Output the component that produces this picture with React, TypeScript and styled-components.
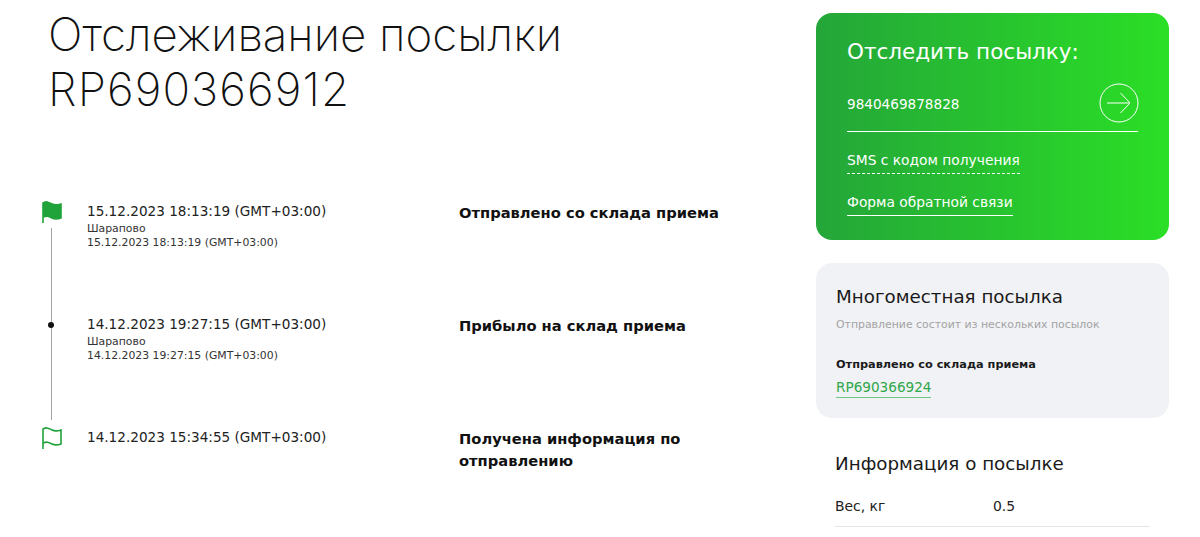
import React from 'react';
import styled, { createGlobalStyle } from 'styled-components';

const GlobalStyle = createGlobalStyle`
  html, body {
    margin: 0;
    padding: 0;
    height: 537px;
    overflow: hidden;
    background: #fff;
    font-family: "DejaVu Sans", "Noto Sans", sans-serif;
    color: #1a1a1a;
  }
`;

const Page = styled.div`
  display: flex;
  width: 1200px;
  height: 537px;
  overflow: hidden;
`;

const Main = styled.main`
  width: 816px;
  padding: 7px 0 0 48px;
  box-sizing: border-box;
`;

const Title = styled.h1`
  margin: 0 0 83px;
  width: 560px;
  font-family: "Inter", sans-serif;
  font-size: 45.7px;
  line-height: 55px;
  font-weight: 200;
  color: #111;
`;

const TitleNumber = styled.span`
  display: block;
  letter-spacing: 1.1px;
`;

const Timeline = styled.div`
  margin-left: -16px;
`;

const Row = styled.div`
  display: flex;
  height: 113px;
`;

const Marker = styled.div`
  width: 39px;
  margin-right: 16px;
  flex: none;
  display: flex;
  flex-direction: column;
  align-items: center;
`;

const MarkerSlot = styled.div<{ $through?: boolean }>`
  width: 24px;
  height: 24px;
  display: flex;
  align-items: center;
  justify-content: center;
  flex: none;
  background: ${(p) =>
    p.$through ? 'linear-gradient(#a3a3a3, #a3a3a3) center / 1px 100% no-repeat' : 'none'};
`;

const Line = styled.div<{ $gapTop?: number; $gapBottom?: number }>`
  width: 1px;
  flex: 1;
  margin-top: ${(p) => p.$gapTop ?? 0}px;
  margin-bottom: ${(p) => p.$gapBottom ?? 0}px;
  background: #a3a3a3;
`;

const Dot = styled.span`
  width: 6px;
  height: 6px;
  margin-right: 1px;
  border-radius: 50%;
  background: #111;
`;

const DateColumn = styled.div`
  width: 372px;
  flex: none;
  padding-top: 2px;
`;

const DateMain = styled.div`
  font-size: 13.6px;
  line-height: 18px;
  margin-bottom: 2px;
  color: #222;
`;

const DateSub = styled.div`
  font-size: 10.85px;
  line-height: 14px;
  color: #333;
`;

const Status = styled.div`
  width: 290px;
  flex: none;
  padding-top: 2px;
  font-size: 14.7px;
  line-height: 22px;
  font-weight: 700;
  color: #111;
`;

const Side = styled.aside`
  width: 353px;
  flex: none;
  padding-top: 13px;
`;

const TrackCard = styled.section`
  height: 227px;
  box-sizing: border-box;
  padding: 25px 31px;
  border-radius: 16px;
  background: linear-gradient(90deg, #24a639 0%, #2bdf26 100%);
  color: #fff;
`;

const TrackTitle = styled.h2`
  margin: 0 0 14px;
  font-size: 21.5px;
  line-height: 28px;
  font-weight: 400;
`;

const TrackInput = styled.div`
  display: flex;
  align-items: center;
  justify-content: space-between;
  height: 47px;
  padding-bottom: 4px;
  border-bottom: 1px solid #fff;
  font-size: 13.6px;
`;

const ArrowButton = styled.span`
  display: flex;
  margin: -2px -1px 0 0;
`;

const TrackLink = styled.a<{ $dashed?: boolean }>`
  display: table;
  margin-top: 19px;
  padding-bottom: 4px;
  font-size: 13.8px;
  line-height: 18px;
  color: #fff;
  border-bottom: 1px ${(p) => (p.$dashed ? 'dashed' : 'solid')} #fff;
`;

const MultiCard = styled.section`
  margin-top: 23px;
  height: 155px;
  box-sizing: border-box;
  padding: 22px 20px;
  border-radius: 16px;
  background: #f1f2f6;
`;

const CardTitle = styled.h3`
  margin: 0;
  font-size: 18.3px;
  line-height: 24px;
  font-weight: 400;
  color: #1a1a1a;
`;

const Hint = styled.div`
  margin-top: 9px;
  font-size: 10.9px;
  line-height: 14px;
  color: #a3a3a3;
`;

const MultiStatus = styled.div`
  margin-top: 25px;
  font-size: 11.3px;
  line-height: 16px;
  font-weight: 700;
  color: #1a1a1a;
`;

const ParcelLink = styled.a`
  display: table;
  margin-top: 5px;
  padding-bottom: 1px;
  font-size: 13.6px;
  line-height: 18px;
  color: #2fa84a;
  border-bottom: 1px solid #6cc783;
`;

const Info = styled.section`
  padding: 34px 19px 0;
`;

const InfoRow = styled.div`
  display: flex;
  margin-top: 21px;
  padding-bottom: 11px;
  font-size: 13.9px;
  line-height: 18px;
  color: #222;
  border-bottom: 1px solid #e4e5ea;
`;

const InfoLabel = styled.span`
  width: 158px;
`;

const FlagIcon = ({ filled }: { filled?: boolean }) => (
  <svg width="22" height="24" viewBox="0 0 22 24" fill="none">
    <path
      d="M2 23V3C6 1 7 2 11 4C14 5.500 17 5 20 4V18C17 19 14 19.500 11 18C7 16 6 15.500 2 17"
      fill={filled ? '#1fa33a' : 'none'}
      stroke="#1fa33a"
      strokeWidth="1.600"
    />
  </svg>
);

const ArrowIcon = () => (
  <svg width="40" height="40" viewBox="0 0 40 40" fill="none" stroke="#fff" strokeWidth="1">
    <circle cx="20" cy="20" r="19" />
    <path d="M8 20H31M21.500 10L31 20L21.500 30" />
  </svg>
);

const events = [
  {
    marker: <FlagIcon filled />,
    date: '15.12.2023 18:13:19 (GMT+03:00)',
    place: 'Шарапово',
    status: 'Отправлено со склада приема',
    gapTop: 4,
  },
  {
    marker: <Dot />,
    through: true,
    date: '14.12.2023 19:27:15 (GMT+03:00)',
    place: 'Шарапово',
    status: 'Прибыло на склад приема',
    gapBottom: 6,
  },
  {
    marker: <FlagIcon />,
    date: '14.12.2023 15:34:55 (GMT+03:00)',
    status: 'Получена информация по отправлению',
    last: true,
  },
];

export default function App() {
  return (
    <Page>
      <GlobalStyle />
      <Main>
        <Title>
          Отслеживание посылки
          <TitleNumber>RP690366912</TitleNumber>
        </Title>
        <Timeline>
          {events.map((e) => (
            <Row key={e.date}>
              <Marker>
                <MarkerSlot $through={e.through}>{e.marker}</MarkerSlot>
                {!e.last && <Line $gapTop={e.gapTop} $gapBottom={e.gapBottom} />}
              </Marker>
              <DateColumn>
                <DateMain>{e.date}</DateMain>
                {e.place && (
                  <>
                    <DateSub>{e.place}</DateSub>
                    <DateSub>{e.date}</DateSub>
                  </>
                )}
              </DateColumn>
              <Status>{e.status}</Status>
            </Row>
          ))}
        </Timeline>
      </Main>
      <Side>
        <TrackCard>
          <TrackTitle>Отследить посылку:</TrackTitle>
          <TrackInput>
            <span>9840469878828</span>
            <ArrowButton>
              <ArrowIcon />
            </ArrowButton>
          </TrackInput>
          <TrackLink $dashed>SMS с кодом получения</TrackLink>
          <TrackLink>Форма обратной связи</TrackLink>
        </TrackCard>
        <MultiCard>
          <CardTitle>Многоместная посылка</CardTitle>
          <Hint>Отправление состоит из нескольких посылок</Hint>
          <MultiStatus>Отправлено со склада приема</MultiStatus>
          <ParcelLink>RP690366924</ParcelLink>
        </MultiCard>
        <Info>
          <CardTitle>Информация о посылке</CardTitle>
          <InfoRow>
            <InfoLabel>Вес, кг</InfoLabel>
            <span>0.5</span>
          </InfoRow>
        </Info>
      </Side>
    </Page>
  );
}
